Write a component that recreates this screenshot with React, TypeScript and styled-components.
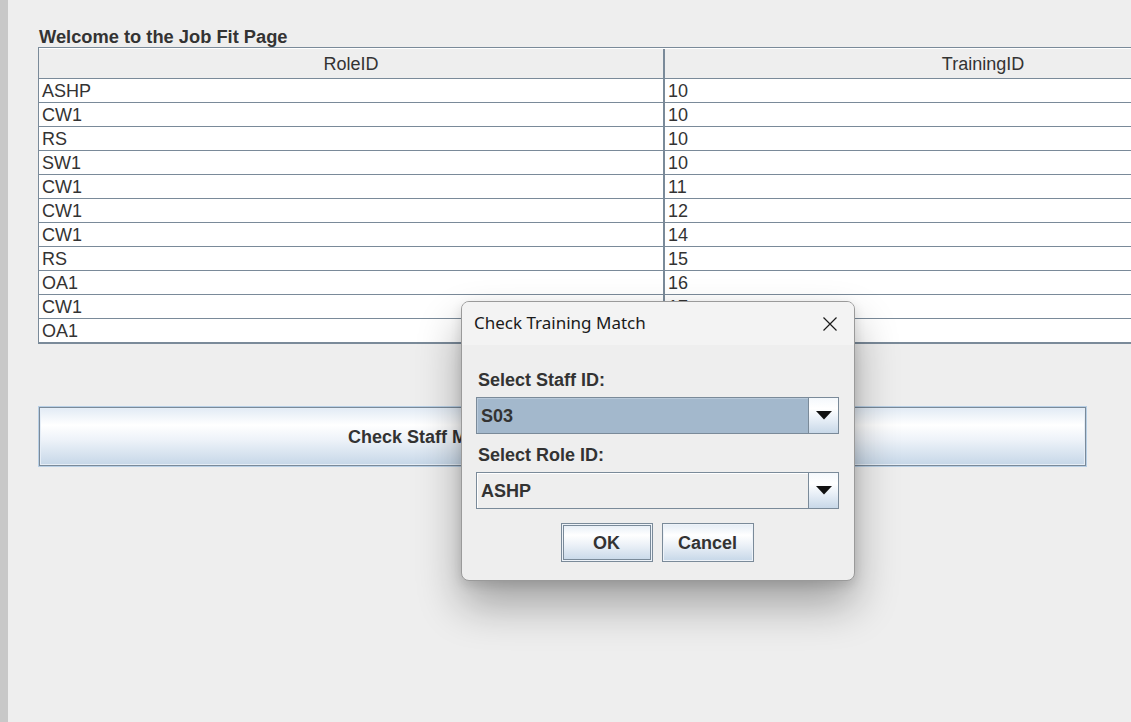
import React from 'react';
import styled, { createGlobalStyle } from 'styled-components';

// ── Data ──────────────────────────────────────────────────────────────────────

const ROWS = [
  { role: 'ASHP', training: '10' },
  { role: 'CW1', training: '10' },
  { role: 'RS', training: '10' },
  { role: 'SW1', training: '10' },
  { role: 'CW1', training: '11' },
  { role: 'CW1', training: '12' },
  { role: 'CW1', training: '14' },
  { role: 'RS', training: '15' },
  { role: 'OA1', training: '16' },
  { role: 'CW1', training: '17' },
  { role: 'OA1', training: '18' },
];

// ── Component ─────────────────────────────────────────────────────────────────

export default function App() {
  return (
    <>
      <GlobalStyle />
      <Window>
        <SideStrip />
        <Main>
          <Heading>Welcome to the Job Fit Page</Heading>

          <Table>
            <HeaderRow>
              <HeaderCell>RoleID</HeaderCell>
              <HeaderCell $last>TrainingID</HeaderCell>
            </HeaderRow>
            {ROWS.map((row, idx) => (
              <Row key={idx}>
                <Cell>{row.role}</Cell>
                <Cell $last>{row.training}</Cell>
              </Row>
            ))}
          </Table>

          <BigButton>Check Staff Match for Role Training Requirements</BigButton>
        </Main>

        {/* Modal dialog over the page */}
        <Dialog>
          <TitleBar>
            <TitleText>Check Training Match</TitleText>
            <CloseIcon width="16" height="16" viewBox="0 0 16 16">
              <path d="M1.5 1.5 14.5 14.5M14.5 1.5 1.5 14.5" stroke="#1a1a1a" strokeWidth="1.2" fill="none" />
            </CloseIcon>
          </TitleBar>

          <DialogBody>
            <FieldLabel>Select Staff ID:</FieldLabel>
            <Combo $selected>
              <ComboValue $selected>S03</ComboValue>
              <ArrowButton>
                <svg width="16" height="9" viewBox="0 0 16 9">
                  <path d="M0 0h16L8 8.5z" fill="#111" />
                </svg>
              </ArrowButton>
            </Combo>

            <FieldLabel $gap>Select Role ID:</FieldLabel>
            <Combo>
              <ComboValue>ASHP</ComboValue>
              <ArrowButton>
                <svg width="16" height="9" viewBox="0 0 16 9">
                  <path d="M0 0h16L8 8.5z" fill="#111" />
                </svg>
              </ArrowButton>
            </Combo>

            <ButtonRow>
              <DialogButton $focused>OK</DialogButton>
              <DialogButton>Cancel</DialogButton>
            </ButtonRow>
          </DialogBody>
        </Dialog>
      </Window>
    </>
  );
}

// ── Styled components ─────────────────────────────────────────────────────────

const GlobalStyle = createGlobalStyle`
  html, body {
    margin: 0;
    padding: 0;
    background: #eeeeee;
    overflow: hidden;
  }
  body {
    font-family: 'Liberation Sans', Arial, sans-serif;
    color: #333333;
  }
`;

const Window = styled.div`
  position: relative;
  display: flex;
  width: 1131px;
  height: 722px;
  overflow: hidden;
  background: #eeeeee;
`;

const SideStrip = styled.div`
  width: 8px;
  flex-shrink: 0;
  background: #c8c8c8;
`;

const Main = styled.div`
  flex: 1;
  display: flex;
  flex-direction: column;
  align-items: flex-start;
  padding: 27px 0 0 30px;
  min-width: 0;
`;

const Heading = styled.h1`
  margin: 0 0 0 1px;
  font-size: 18.3px;
  line-height: 20px;
  font-weight: bold;
  color: #333333;
`;

/* ── Table ── */
const Table = styled.div`
  width: 1262px;
  flex-shrink: 0;
  border: 1px solid #7a8a99;
  border-right: none;
  background: #ffffff;
`;

const HeaderRow = styled.div`
  display: grid;
  grid-template-columns: 624px 1fr;
  height: 29px;
  background: #eeeeee;
  border-top: 1px solid #ffffff;
  border-bottom: 1px solid #7a8a99;
`;

const HeaderCell = styled.div<{ $last?: boolean }>`
  display: flex;
  align-items: center;
  justify-content: center;
  font-size: 18px;
  color: #333333;
  padding-top: 2px;
  border-left: ${(p) => (p.$last ? '2px solid #7a8a99' : 'none')};
`;

const Row = styled.div`
  display: grid;
  grid-template-columns: 624px 1fr;
  height: 23px;
  border-bottom: 1px solid #7a8a99;
  background: #ffffff;
`;

const Cell = styled.div<{ $last?: boolean }>`
  display: flex;
  align-items: center;
  padding: 1px 0 0 3px;
  font-size: 18px;
  color: #333333;
  border-left: ${(p) => (p.$last ? '2px solid #7a8a99' : 'none')};
`;

/* ── Big button ── */
const BigButton = styled.button`
  box-sizing: border-box;
  margin: 63px 0 0 1px;
  width: 1047px;
  height: 59px;
  border: 1px solid #7a8a99;
  outline: 1px solid #b8cfe5;
  box-shadow: inset 0 0 0 1px #e6eef7;
  background: linear-gradient(180deg, #e2ebf5 0%, #ffffff 30%, #eef3f9 55%, #c6d7e8 100%);
  font-family: 'Liberation Sans', Arial, sans-serif;
  font-size: 18px;
  font-weight: bold;
  color: #333333;
  padding: 2px 0 0;
`;

/* ── Dialog ── */
const Dialog = styled.div`
  position: absolute;
  left: 461px;
  top: 301px;
  width: 394px;
  height: 280px;
  box-sizing: border-box;
  border: 1px solid #9a9a9a;
  border-radius: 8px;
  overflow: hidden;
  background: #eeeeee;
  box-shadow: 0 24px 44px rgba(0, 0, 0, 0.32), 0 4px 12px rgba(0, 0, 0, 0.12);
  display: flex;
  flex-direction: column;
`;

const TitleBar = styled.div`
  height: 43px;
  flex-shrink: 0;
  background: #f3f3f3;
  display: flex;
  align-items: center;
  justify-content: space-between;
  padding: 0 16px 0 12px;
`;

const TitleText = styled.span`
  font-family: 'Noto Sans', 'Open Sans', sans-serif;
  font-size: 17px;
  color: #1a1a1a;
  margin-top: -2px;
`;

const CloseIcon = styled.svg`
  display: block;
`;

const DialogBody = styled.div`
  flex: 1;
  display: flex;
  flex-direction: column;
  padding: 25px 15px 0 14px;
`;

const FieldLabel = styled.div<{ $gap?: boolean }>`
  font-size: 18px;
  line-height: 20px;
  font-weight: bold;
  color: #333333;
  margin: ${(p) => (p.$gap ? '11px' : '0')} 0 7px 2px;
`;

const Combo = styled.div<{ $selected?: boolean }>`
  display: flex;
  height: 37px;
  box-sizing: border-box;
  border: 1px solid #7a8a99;
  background: ${(p) => (p.$selected ? '#a3b8cc' : '#eeeeee')};
`;

const ComboValue = styled.div<{ $selected?: boolean }>`
  flex: 1;
  display: flex;
  align-items: center;
  padding: 2px 0 0 4px;
  font-size: 18px;
  font-weight: bold;
  color: #333333;
  box-shadow: inset 1px 1px 0 ${(p) => (p.$selected ? '#b8c9da' : '#ffffff')};
`;

const ArrowButton = styled.div`
  width: 29px;
  flex-shrink: 0;
  border-left: 1px solid #7a8a99;
  background: linear-gradient(180deg, #f4f8fc 0%, #ffffff 30%, #e8eff7 60%, #c8d8e8 100%);
  display: flex;
  align-items: center;
  justify-content: center;
`;

const ButtonRow = styled.div`
  display: flex;
  justify-content: center;
  gap: 9px;
  margin-top: 14px;
  padding-right: 1px;
`;

const DialogButton = styled.button<{ $focused?: boolean }>`
  box-sizing: border-box;
  height: 39px;
  min-width: 92px;
  padding: 2px 14px 0;
  border: 1px solid #7a8a99;
  box-shadow: ${(p) =>
    p.$focused ? 'inset 0 0 0 1px #eef3f9, inset 0 0 0 2px #7a8a99' : 'inset 0 0 0 1px #eef3f9'};
  background: linear-gradient(180deg, #e4ecf5 0%, #ffffff 30%, #edf2f8 55%, #c6d7e8 100%);
  font-family: 'Liberation Sans', Arial, sans-serif;
  font-size: 18px;
  font-weight: bold;
  color: #333333;
`;
